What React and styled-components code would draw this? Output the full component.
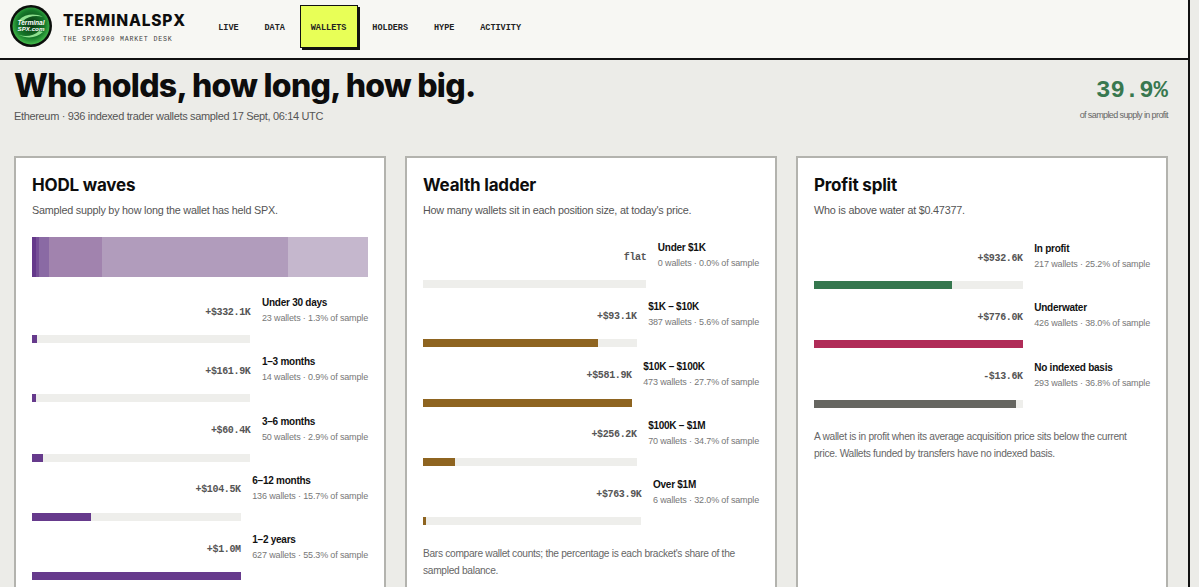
import styled, { createGlobalStyle } from 'styled-components';

const GlobalStyle = createGlobalStyle`
  html, body {
    margin: 0;
    height: 100%;
    overflow: hidden;
    background: #ecece8;
  }

  body {
    font-family: "Liberation Sans", Arial, sans-serif;
    color: #0d0d0d;
  }
`;

const Shell = styled.div`
  width: 1190px;
  height: 587px;
  box-sizing: border-box;
  border-right: 2px solid #111;
  overflow: hidden;
`;

const Header = styled.header`
  height: 60px;
  box-sizing: border-box;
  display: flex;
  align-items: center;
  padding: 0 10px 6px;
  background: #f7f7f3;
  border-bottom: 2px solid #111;
`;

const Brand = styled.div`
  width: 197px;
  display: flex;
  align-items: center;
  column-gap: 11px;
`;

const BrandText = styled.div`
  display: flex;
  flex-direction: column;
  row-gap: 7px;
  padding-top: 5px;
`;

const BrandName = styled.span`
  font-family: Inter, sans-serif;
  font-size: 15.5px;
  font-weight: 800;
  line-height: 16px;
  letter-spacing: 0.8px;
`;

const BrandTag = styled.span`
  font-family: "Liberation Mono", monospace;
  font-size: 6.6px;
  line-height: 8px;
  letter-spacing: 0.8px;
  color: #444;
`;

const Nav = styled.nav`
  display: flex;
  align-items: center;
  column-gap: 3.5px;
`;

const NavItem = styled.a`
  height: 43px;
  box-sizing: border-box;
  display: flex;
  align-items: center;
  padding: 3px 10.2px 0;
  border: 1px solid ${(p) => (p.$active ? '#111' : 'transparent')};
  box-shadow: ${(p) => (p.$active ? '2px 2px 0 #111' : 'none')};
  background: ${(p) => (p.$active ? '#e8ff57' : 'transparent')};
  font-family: "Liberation Mono", monospace;
  font-size: 8.5px;
  font-weight: 700;
  color: #222;
`;

const Hero = styled.section`
  height: 96px;
  box-sizing: border-box;
  display: flex;
  justify-content: space-between;
  padding: 8px 20px 0 14px;
`;

const HeroTitle = styled.h1`
  margin: 0;
  font-family: Inter, sans-serif;
  font-size: 32px;
  font-weight: 800;
  line-height: 36px;
  letter-spacing: -0.72px;
  color: #0d0d0d;
`;

const HeroSub = styled.p`
  margin: 5px 0 0;
  font-size: 11px;
  line-height: 14px;
  letter-spacing: -0.34px;
  color: #555;
`;

const Stat = styled.div`
  display: flex;
  flex-direction: column;
  align-items: flex-end;
  padding-top: 9px;
`;

const StatValue = styled.span`
  font-family: "Liberation Mono", monospace;
  font-size: 24px;
  font-weight: 700;
  line-height: 28px;
  color: #38784f;
`;

const StatLabel = styled.span`
  margin-top: 4px;
  font-size: 9px;
  line-height: 12px;
  letter-spacing: -0.6px;
  color: #666;
`;

const Cards = styled.main`
  display: grid;
  grid-template-columns: repeat(3, 372px);
  column-gap: 19px;
  padding-left: 14px;
`;

const Card = styled.article`
  box-sizing: border-box;
  padding: 17px 16px;
  background: #fff;
  border: 2px solid #b3b3ae;
`;

const CardTitle = styled.h2`
  margin: 0;
  font-family: Inter, sans-serif;
  font-size: 17px;
  font-weight: 700;
  line-height: 20px;
  letter-spacing: -0.2px;
`;

const CardSub = styled.p`
  margin: 8px 0 0;
  font-size: 10.8px;
  line-height: 14px;
  letter-spacing: -0.23px;
  color: #555;
`;

const StackBar = styled.div`
  height: 40px;
  display: flex;
  margin-top: 20px;
`;

const StackPart = styled.div`
  background: ${(p) => p.$color};
`;

const Rows = styled.div`
  display: flex;
  flex-direction: column;
  row-gap: 12.25px;
  margin-top: ${(p) => p.$top}px;
`;

const Row = styled.div`
  display: grid;
  grid-template-columns: 1fr auto;
  column-gap: 11.5px;
  row-gap: 10px;
`;

const RowValue = styled.span`
  align-self: center;
  justify-self: end;
  padding-top: 3px;
  font-family: "Liberation Mono", monospace;
  font-size: 10px;
  font-weight: 700;
  letter-spacing: -0.35px;
  color: #555;
`;

const RowInfo = styled.div`
  display: flex;
  flex-direction: column;
  row-gap: 3px;
`;

const RowName = styled.span`
  font-size: 10px;
  font-weight: 700;
  line-height: 13px;
  letter-spacing: -0.25px;
  color: #111;
`;

const RowMeta = styled.span`
  font-size: 9px;
  line-height: 13px;
  letter-spacing: -0.15px;
  color: #777;
`;

const Track = styled.div`
  height: 8px;
  background: #eeeeeb;
`;

const Fill = styled.div`
  height: 100%;
  background: ${(p) => p.$color};
`;

const Note = styled.p`
  margin: ${(p) => p.$top}px 0 0;
  font-size: 10.2px;
  line-height: 17px;
  letter-spacing: -0.3px;
  color: #666;
`;

const stack = [
  { share: 1.3, color: '#65398b' },
  { share: 0.9, color: '#764f97' },
  { share: 2.9, color: '#8a6aa4' },
  { share: 15.7, color: '#a183ae' },
  { share: 55.3, color: '#b19cbc' },
  { share: 23.8, color: '#c5b7cd' },
];

const hodl = [
  { value: '+$332.1K', name: 'Under 30 days', wallets: 23, share: 1.3 },
  { value: '+$161.9K', name: '1–3 months', wallets: 14, share: 0.9 },
  { value: '+$60.4K', name: '3–6 months', wallets: 50, share: 2.9 },
  { value: '+$104.5K', name: '6–12 months', wallets: 136, share: 15.7 },
  { value: '+$1.0M', name: '1–2 years', wallets: 627, share: 55.3 },
];

const wealth = [
  { value: 'flat', name: 'Under $1K', wallets: 0, share: 0 },
  { value: '+$93.1K', name: '$1K – $10K', wallets: 387, share: 5.6 },
  { value: '+$581.9K', name: '$10K – $100K', wallets: 473, share: 27.7 },
  { value: '+$256.2K', name: '$100K – $1M', wallets: 70, share: 34.7 },
  { value: '+$763.9K', name: 'Over $1M', wallets: 6, share: 32.0 },
];

const profit = [
  { value: '+$932.6K', name: 'In profit', wallets: 217, share: 25.2, color: '#35774e' },
  { value: '+$776.0K', name: 'Underwater', wallets: 426, share: 38.0, color: '#b02c58' },
  { value: '-$13.6K', name: 'No indexed basis', wallets: 293, share: 36.8, color: '#666661' },
];

const Logo = () => (
  <svg width="42" height="42" viewBox="0 0 42 42">
    <defs>
      <radialGradient id="logoGreen" cx="50%" cy="45%" r="55%">
        <stop offset="0%" stopColor="#08300f" />
        <stop offset="68%" stopColor="#167a2a" />
        <stop offset="100%" stopColor="#45bd4c" />
      </radialGradient>
    </defs>
    <circle cx="21" cy="21" r="21" fill="#0b0f0b" />
    <circle cx="21" cy="21" r="18.5" fill="url(#logoGreen)" />
    <path d="M9 15c6-6 16-7 24-3-7-2-15-1-20 4z" fill="#8ee08f" />
    <path d="M33 27c-6 6-16 7-24 3 7 2 15 1 20-4z" fill="#8ee08f" />
    <text x="21" y="20" textAnchor="middle" fontFamily="Liberation Sans, sans-serif" fontSize="6.6" fontStyle="italic" fontWeight="700" fill="#fff">Terminal</text>
    <text x="21" y="26" textAnchor="middle" fontFamily="Liberation Sans, sans-serif" fontSize="6.2" fontStyle="italic" fontWeight="700" fill="#fff">SPX.com</text>
  </svg>
);

const BarRows = ({ items, color, top, measure }) => {
  const max = Math.max(...items.map(measure));

  return (
    <Rows $top={top}>
      {items.map((item) => (
        <Row key={item.name}>
          <RowValue>{item.value}</RowValue>
          <RowInfo>
            <RowName>{item.name}</RowName>
            <RowMeta>
              {item.wallets} wallets · {item.share.toFixed(1)}% of sample
            </RowMeta>
          </RowInfo>
          <Track>
            <Fill $color={item.color || color} style={{ width: `${(measure(item) / max) * 100}%` }} />
          </Track>
        </Row>
      ))}
    </Rows>
  );
};

const App = () => {
  return (
    <Shell>
      <GlobalStyle />
      <Header>
        <Brand>
          <Logo />
          <BrandText>
            <BrandName>TERMINALSPX</BrandName>
            <BrandTag>THE SPX6900 MARKET DESK</BrandTag>
          </BrandText>
        </Brand>
        <Nav>
          <NavItem>LIVE</NavItem>
          <NavItem>DATA</NavItem>
          <NavItem $active>WALLETS</NavItem>
          <NavItem>HOLDERS</NavItem>
          <NavItem>HYPE</NavItem>
          <NavItem>ACTIVITY</NavItem>
        </Nav>
      </Header>

      <Hero>
        <div>
          <HeroTitle>Who holds, how long, how big.</HeroTitle>
          <HeroSub>Ethereum · 936 indexed trader wallets sampled 17 Sept, 06:14 UTC</HeroSub>
        </div>
        <Stat>
          <StatValue>39.9%</StatValue>
          <StatLabel>of sampled supply in profit</StatLabel>
        </Stat>
      </Hero>

      <Cards>
        <Card>
          <CardTitle>HODL waves</CardTitle>
          <CardSub>Sampled supply by how long the wallet has held SPX.</CardSub>
          <StackBar>
            {stack.map((part) => (
              <StackPart key={part.color} $color={part.color} style={{ width: `${part.share}%` }} />
            ))}
          </StackBar>
          <BarRows items={hodl} color="#663a8c" top={19} measure={(item) => item.share} />
        </Card>

        <Card>
          <CardTitle>Wealth ladder</CardTitle>
          <CardSub>How many wallets sit in each position size, at today's price.</CardSub>
          <BarRows items={wealth} color="#8e6420" top={24} measure={(item) => item.wallets} />
          <Note $top={20}>Bars compare wallet counts; the percentage is each bracket's share of the sampled balance.</Note>
        </Card>

        <Card>
          <CardTitle>Profit split</CardTitle>
          <CardSub>Who is above water at $0.47377.</CardSub>
          <BarRows items={profit} top={25} measure={(item) => item.share} />
          <Note $top={20}>A wallet is in profit when its average acquisition price sits below the current price. Wallets funded by transfers have no indexed basis.</Note>
        </Card>
      </Cards>
    </Shell>
  );
};

export default App;
